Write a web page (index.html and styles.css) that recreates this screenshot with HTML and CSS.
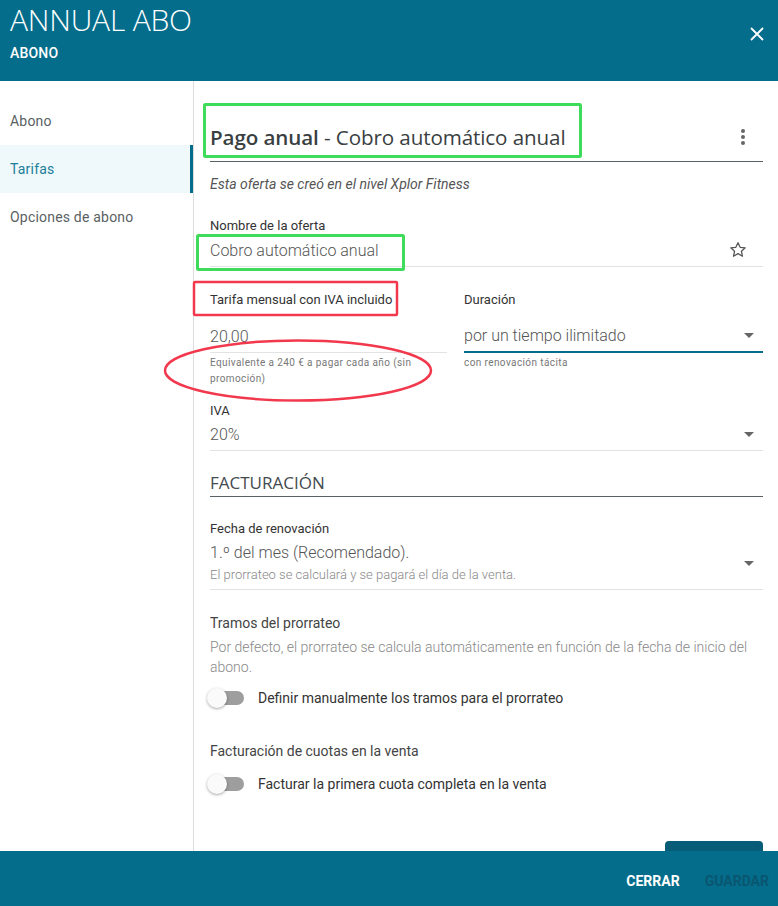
FILE: index.html
```html
<!DOCTYPE html>
<html lang="es">
<head>
    <meta charset="UTF-8">
    <title>Annual Abo</title>
    <link rel="stylesheet" href="styles.css">
</head>
<body>
    <div class="modal">
        <header class="modal-header">
            <div>
                <h1 class="modal-title">ANNUAL ABO</h1>
                <div class="modal-subtitle">ABONO</div>
            </div>
            <button class="close-btn" aria-label="Cerrar">
                <svg width="14" height="14" viewBox="0 0 14 14"><path d="M1 1L13 13M13 1L1 13" stroke="#fff" stroke-width="1.8" fill="none"/></svg>
            </button>
        </header>

        <div class="modal-body">
            <nav class="side-nav">
                <a class="nav-item">Abono</a>
                <a class="nav-item active">Tarifas</a>
                <a class="nav-item">Opciones de abono</a>
            </nav>

            <main class="content">
                <div class="offer-head">
                    <h2 class="offer-title"><b>Pago anual</b> - Cobro automático anual</h2>
                    <span class="kebab"><i></i><i></i><i></i></span>
                </div>
                <p class="origin-note">Esta oferta se creó en el nivel Xplor Fitness</p>

                <div class="field">
                    <label class="field-label">Nombre de la oferta</label>
                    <div class="field-input">
                        <span class="value">Cobro automático anual</span>
                        <svg class="star" width="20" height="20" viewBox="0 0 24 24"><path d="M12 3.2l2.6 5.6 6.1.6-4.6 4.1 1.3 6-5.4-3.1-5.4 3.1 1.3-6-4.6-4.1 6.1-.6z" fill="none" stroke="#555" stroke-width="1.5" stroke-linejoin="round"/></svg>
                    </div>
                </div>

                <div class="field-row">
                    <div class="field">
                        <label class="field-label">Tarifa mensual con IVA incluido</label>
                        <div class="field-input">
                            <span class="value">20,00</span>
                        </div>
                        <div class="hint">Equivalente a 240 € a pagar cada año (sin promoción)</div>
                    </div>
                    <div class="field">
                        <label class="field-label">Duración</label>
                        <div class="field-input focused">
                            <span class="value">por un tiempo ilimitado</span>
                            <span class="caret"></span>
                        </div>
                        <div class="hint">con renovación tácita</div>
                    </div>
                </div>

                <div class="field field-iva">
                    <label class="field-label">IVA</label>
                    <div class="field-input">
                        <span class="value">20%</span>
                        <span class="caret"></span>
                    </div>
                </div>

                <h3 class="section-title">FACTURACIÓN</h3>

                <div class="field">
                    <label class="field-label">Fecha de renovación</label>
                    <div class="field-input tall">
                        <div>
                            <div class="value">1.º del mes (Recomendado).</div>
                            <div class="sub-value">El prorrateo se calculará y se pagará el día de la venta.</div>
                        </div>
                        <span class="caret"></span>
                    </div>
                </div>

                <div class="option-block">
                    <div class="option-title">Tramos del prorrateo</div>
                    <p class="option-desc">Por defecto, el prorrateo se calcula automáticamente en función de la fecha de inicio del abono.</p>
                    <div class="toggle-row">
                        <span class="toggle"><span class="knob"></span></span>
                        <span>Definir manualmente los tramos para el prorrateo</span>
                    </div>
                </div>

                <div class="option-block">
                    <div class="option-title">Facturación de cuotas en la venta</div>
                    <div class="toggle-row">
                        <span class="toggle"><span class="knob"></span></span>
                        <span>Facturar la primera cuota completa en la venta</span>
                    </div>
                </div>

                <div class="content-actions">
                    <button class="add-btn">AÑADIR</button>
                </div>
            </main>
        </div>

        <footer class="modal-footer">
            <button class="footer-btn">CERRAR</button>
            <button class="footer-btn disabled">GUARDAR</button>
        </footer>

        <!-- marcas de revisión -->
        <svg class="marks" width="778" height="906">
            <rect x="204.5" y="104.5" width="376" height="52" fill="none" stroke="#3fdc5c" stroke-width="3" rx="1"/>
            <rect x="197.5" y="235.5" width="206" height="34" fill="none" stroke="#3fdc5c" stroke-width="3" rx="1"/>
            <rect x="194" y="282" width="203" height="33" fill="none" stroke="#f2384c" stroke-width="2.5" rx="1"/>
            <ellipse cx="298" cy="370.5" rx="133" ry="30" fill="none" stroke="#f2384c" stroke-width="2.5"/>
        </svg>
    </div>
</body>
</html>
```

FILE: styles.css
```css
html, body {
    margin: 0;
    padding: 0;
    height: 100%;
    font-family: Roboto, "Liberation Sans", sans-serif;
    background: #fff;
    color: #333;
}
.modal {
    position: relative;
    height: 100vh;
    display: flex;
    flex-direction: column;
    overflow: hidden;
}
.modal-header {
    height: 81px;
    flex: none;
    background: #046d8b;
    color: #fff;
    display: flex;
    justify-content: space-between;
    align-items: flex-start;
    padding: 0 14px 0 10px;
}
.modal-title {
    margin: 2px 0 0;
    font-family: "Open Sans", sans-serif;
    font-weight: 300;
    font-size: 30px;
    letter-spacing: -0.2px;
    line-height: 36px;
}
.modal-subtitle {
    margin-top: 7px;
    font-size: 14px;
    font-weight: 500;
    letter-spacing: 0.2px;
}
.close-btn {
    margin-top: 27px;
    padding: 0;
    border: none;
    background: none;
    cursor: pointer;
    line-height: 0;
}
.modal-body {
    flex: 1;
    display: flex;
    min-height: 0;
}
.side-nav {
    width: 193px;
    flex: none;
    padding-top: 16px;
    border-right: 1px solid #dcdcdc;
}
.nav-item {
    display: block;
    height: 48px;
    line-height: 48px;
    padding-left: 10px;
    font-size: 14px;
    color: #5a5f63;
    letter-spacing: 0.2px;
}
.nav-item.active {
    background: #eff8fa;
    color: #1b7e99;
    box-shadow: inset -3px 0 0 #046d8b;
}
.content {
    flex: 1;
    padding: 0 15px 0 16px;
    min-width: 0;
}
.offer-head {
    display: flex;
    justify-content: space-between;
    align-items: center;
    height: 48px;
    padding-top: 12px;
    margin-top: 20px;
    border-bottom: 1px solid #5b6266;
}
.offer-title {
    margin: 0;
    font-family: "Open Sans", sans-serif;
    font-weight: 400;
    font-size: 20.6px;
    color: #3a3f42;
    letter-spacing: -0.1px;
}
.offer-title b {
    font-weight: 600;
}
.kebab {
    display: flex;
    flex-direction: column;
    gap: 2px;
    margin-right: 18px;
}
.kebab i {
    width: 4px;
    height: 4px;
    border-radius: 50%;
    background: #666;
}
.origin-note {
    margin: 14px 0 0;
    font-size: 14px;
    font-style: italic;
    color: #555;
}
.field {
    margin-top: 26px;
}
.field-label {
    display: block;
    font-size: 13px;
    color: #333;
    line-height: 16px;
}
.field-input {
    display: flex;
    justify-content: space-between;
    align-items: center;
    height: 32px;
    border-bottom: 1px solid #e3e3e3;
    font-size: 16px;
    font-weight: 300;
    color: #555;
}
.field-input.focused {
    border-bottom: 2px solid #046d8b;
}
.star {
    margin-right: 15px;
}
.caret {
    width: 0;
    height: 0;
    border-left: 5px solid transparent;
    border-right: 5px solid transparent;
    border-top: 5px solid #666;
    margin-right: 9px;
}
.field-row {
    display: grid;
    grid-template-columns: 237px 1fr;
    gap: 17px;
}
.field-row .field {
    margin-top: 25px;
}
.field-row .field-input {
    height: 32px;
    padding-top: 12px;
}
.field-row .field-input.focused {
    height: 31px;
}
.hint {
    margin-top: 2px;
    font-size: 10px;
    line-height: 16px;
    color: #777;
    letter-spacing: 0.4px;
}
.field-iva {
    margin-top: 16px;
}
.field-iva .field-input {
    height: 31px;
}
.section-title {
    margin: 20px 0 0;
    padding-bottom: 2px;
    font-family: "Open Sans", sans-serif;
    font-weight: 400;
    font-size: 17px;
    color: #434a4e;
    border-bottom: 1px solid #5b6266;
}
.section-title + .field {
    margin-top: 24px;
}
.field-input.tall {
    height: auto;
    padding: 6px 0;
}
.field-input.tall .value {
    line-height: 20px;
}
.sub-value {
    margin-top: 4px;
    font-size: 13px;
    line-height: 16px;
    color: #888;
}
.option-block {
    margin-top: 25px;
    font-size: 14px;
}
.option-title {
    color: #444;
}
.option-desc {
    margin: 6px 0 0;
    font-size: 14px;
    font-weight: 300;
    line-height: 20px;
    color: #888;
}
.toggle-row {
    display: flex;
    align-items: center;
    gap: 14px;
    margin-top: 6px;
    height: 30px;
    color: #333;
}
.option-block + .option-block {
    margin-top: 30px;
}
.option-block + .option-block .toggle-row {
    margin-top: 10px;
}
.toggle {
    position: relative;
    width: 34px;
    height: 14px;
    border-radius: 7px;
    background: #9e9e9e;
}
.knob {
    position: absolute;
    left: -3px;
    top: -3px;
    width: 20px;
    height: 20px;
    border-radius: 50%;
    background: #fafafa;
    box-shadow: 0 1px 3px rgba(0,0,0,0.35);
}
.content-actions {
    display: flex;
    justify-content: flex-end;
    margin-top: 42px;
}
.add-btn {
    width: 98px;
    height: 36px;
    border: none;
    border-radius: 4px;
    background: #075c78;
    color: #fff;
    font-weight: 500;
}
.modal-footer {
    height: 55px;
    flex: none;
    background: #046d8b;
    display: flex;
    justify-content: flex-end;
    align-items: center;
    gap: 25px;
    padding: 4px 9px 0 0;
    box-sizing: border-box;
    position: relative;
    z-index: 1;
}
.footer-btn {
    border: none;
    background: none;
    padding: 0;
    font-family: Roboto, sans-serif;
    font-weight: 700;
    font-size: 14px;
    letter-spacing: 0;
    color: #fff;
}
.footer-btn.disabled {
    color: #0a5670;
}
.marks {
    position: absolute;
    left: 0;
    top: 0;
    pointer-events: none;
    z-index: 2;
}
```
